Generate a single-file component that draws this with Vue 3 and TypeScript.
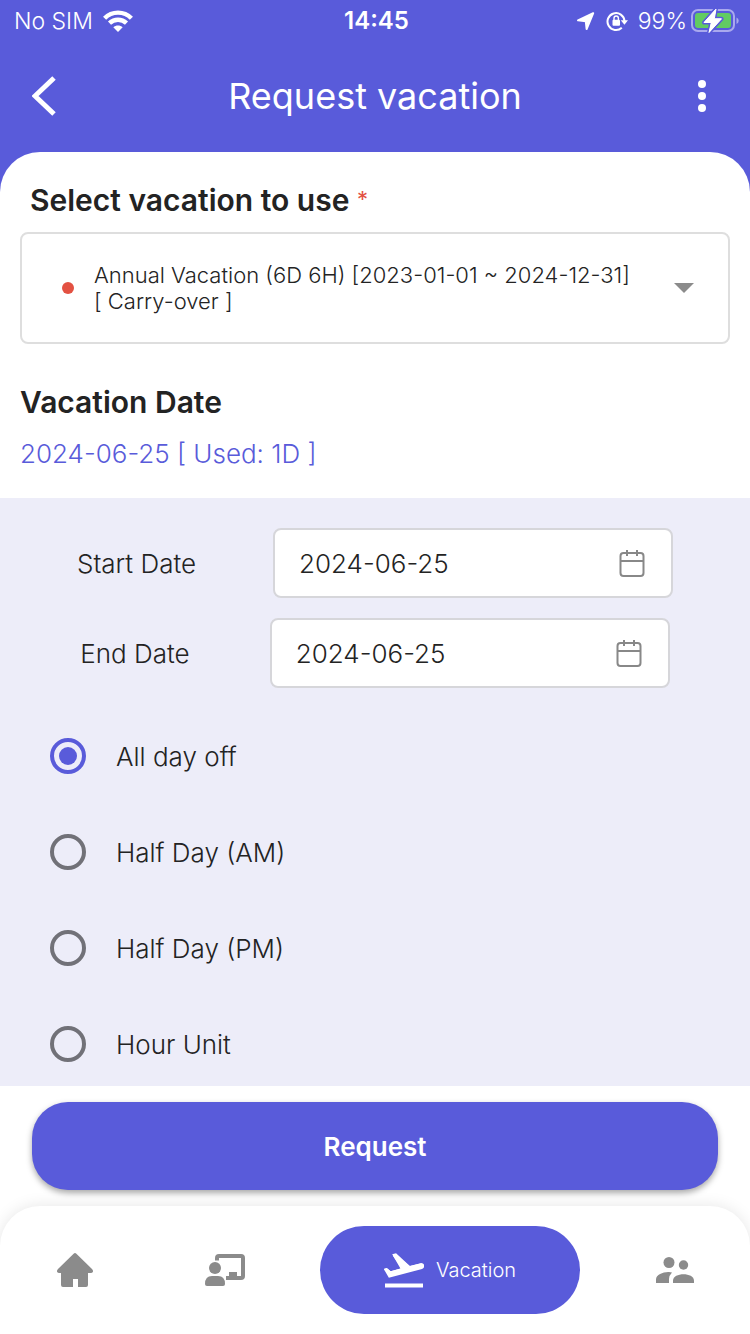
<script setup lang="ts">
import { ref } from 'vue'

interface DateField {
  id: string
  label: string
  value: string
}

interface LeaveUnit {
  value: string
  label: string
}

const vacations: string[] = [
  'Annual Vacation (6D 6H) [2023-01-01 ~ 2024-12-31] [\u00a0Carry-over\u00a0]',
]
const selectedVacation = ref<string>(vacations[0])

const dates = ref<DateField[]>([
  { id: 'start-date', label: 'Start Date', value: '2024-06-25' },
  { id: 'end-date', label: 'End Date', value: '2024-06-25' },
])

const units: LeaveUnit[] = [
  { value: 'all', label: 'All day off' },
  { value: 'am', label: 'Half Day (AM)' },
  { value: 'pm', label: 'Half Day (PM)' },
  { value: 'hour', label: 'Hour Unit' },
]
const unit = ref<string>('all')
</script>

<template>
  <div class="screen">
    <div class="status">
      <div class="status-side">
        <span>No SIM</span>
        <svg class="wifi" viewBox="0 0 30 22" width="30" height="22" aria-hidden="true">
          <g fill="none" stroke="#fff" stroke-width="4.4">
            <path d="M1.6 8.2C9 .7 21 .7 28.4 8.2" />
            <path d="M6.5 13.2c4.800-4.600 12.200-4.600 17 0" />
          </g>
          <path d="M15 22l-4.700-4.700c2.600-2.300 6.800-2.300 9.400 0z" fill="#fff" />
        </svg>
      </div>
      <span class="clock">14:45</span>
      <div class="status-side status-right">
        <svg viewBox="0 0 20 20" width="20" height="20" aria-hidden="true">
          <path d="M17.200 2.200L2 9.300l7.800 1L10.600 18z" fill="#fff" stroke="#fff" stroke-width="2" stroke-linejoin="round" />
        </svg>
        <svg class="lock" viewBox="0 0 22 22" width="22" height="22" aria-hidden="true">
          <path d="M15.800 17.800A8.500 8.500 0 1 1 18.500 11" fill="none" stroke="#fff" stroke-width="2" />
          <path d="M14.800 10.300h7.200l-3.600 4.500z" fill="#fff" />
          <rect x="6.500" y="9.800" width="7.500" height="6" rx="1" fill="#fff" />
          <path d="M8 10V8.200a2.200 2.200 0 0 1 4.400 0V10" fill="none" stroke="#fff" stroke-width="1.400" />
        </svg>
        <span>99%</span>
        <svg class="battery" viewBox="0 0 48 26" width="48" height="26" aria-hidden="true">
          <rect x="1" y="2" width="42" height="21" rx="6" fill="none" stroke="#a9a9ee" stroke-width="2" />
          <rect x="4" y="5" width="36" height="15" rx="3" fill="#62cb62" />
          <path d="M45.500 9.500v6.500q2.200-1 2.200-3.200t-2.200-3.300z" fill="#a9a9ee" />
          <path d="M25 1L13 14.500h7.300L18 24.500 30.500 10.800h-7.200z" fill="#fff" stroke="#595bda" stroke-width="4" paint-order="stroke" stroke-linejoin="round" />
          <path d="M25 1L13 14.500h7.300L18 24.500 30.500 10.800h-7.200z" fill="#fff" stroke="#fff" stroke-width="1" stroke-linejoin="round" />
        </svg>
      </div>
    </div>

    <header class="header">
      <button class="icon-button" type="button" aria-label="Back">
        <svg viewBox="0 0 24 40" width="24" height="40" aria-hidden="true">
          <path d="M22 2L3 20l19 18" fill="none" stroke="#fff" stroke-width="5" />
        </svg>
      </button>
      <h1>Request vacation</h1>
      <button class="icon-button more" type="button" aria-label="More options">
        <svg viewBox="0 0 8 32" width="8" height="32" aria-hidden="true">
          <g fill="#fff">
            <circle cx="4" cy="4" r="4" />
            <circle cx="4" cy="16" r="4" />
            <circle cx="4" cy="28" r="4" />
          </g>
        </svg>
      </button>
    </header>

    <main class="sheet">
      <section class="choose">
        <label class="heading choose-label" for="vacation">
          Select vacation to use <span class="required">*</span>
        </label>
        <div class="select-box">
          <span class="dot"></span>
          <select id="vacation" v-model="selectedVacation">
            <option v-for="v in vacations" :key="v" :value="v">{{ v }}</option>
          </select>
          <svg viewBox="0 0 20 10" width="20" height="10" aria-hidden="true">
            <path d="M0 0h20L10 10z" fill="#8b8b8b" />
          </svg>
        </div>
      </section>

      <section class="summary">
        <h2 class="heading">Vacation Date</h2>
        <p>2024-06-25 [ Used: 1D ]</p>
      </section>

      <section class="panel">
        <div v-for="d in dates" :key="d.id" class="date-row">
          <label :for="d.id">{{ d.label }}</label>
          <div class="date-box">
            <input :id="d.id" v-model="d.value" type="text" />
            <button type="button" :aria-label="'Pick ' + d.label">
              <svg viewBox="0 0 26 28" width="26" height="28" aria-hidden="true">
                <g fill="none" stroke="#888" stroke-width="2">
                  <rect x="1.500" y="4" width="23" height="23" rx="3" />
                  <path d="M1.500 12h23M8 1v6M18 1v6" />
                </g>
              </svg>
            </button>
          </div>
        </div>

        <div class="units" role="radiogroup" aria-label="Vacation unit">
          <label v-for="u in units" :key="u.value" class="unit">
            <input v-model="unit" type="radio" name="unit" :value="u.value" />
            <span>{{ u.label }}</span>
          </label>
        </div>
      </section>
    </main>

    <div class="action">
      <button class="request" type="button">Request</button>
    </div>

    <nav class="nav">
      <a href="#home" class="tab" aria-label="Home">
        <svg viewBox="0 0 36 34" width="36" height="34" aria-hidden="true">
          <path d="M18 0Q18.700 0 19.400.7L35 16q1.500 1.700.8 3-.5 1-2 1H31v12q0 2-2 2h-8v-8h-5v8H6q-2 0-2-2V20H2.200Q.7 20 .2 19q-.7-1.300.8-3L16.600.7Q17.300 0 18 0z" fill="#8b8b8b" />
        </svg>
      </a>
      <a href="#class" class="tab" aria-label="Work">
        <svg viewBox="0 0 40 32" width="40" height="32" aria-hidden="true">
          <path d="M12 6.500V4q0-2 2-2h22q2 0 2 2v18q0 2-2 2H21" fill="none" stroke="#8b8b8b" stroke-width="4" />
          <path d="M24 23v-5h8v5z" fill="#8b8b8b" />
          <circle cx="10" cy="14" r="6" fill="#8b8b8b" />
          <path d="M0 30q0-8 7-8h6q7 0 7 8 0 2-2 2H2q-2 0-2-2z" fill="#8b8b8b" />
        </svg>
      </a>
      <a href="#vacation" class="tab active" aria-current="page">
        <svg viewBox="2 3.500 20 17.500" width="40" height="35" aria-hidden="true">
          <path d="M2.500 18.800h19v2h-19zM22.070 9.640c-.21-.8-1.040-1.280-1.840-1.060L14.920 10l-6.900-6.430-1.930.51 4.140 7.170-4.970 1.330-1.970-1.540-1.450.39 2.590 4.490L21 11.490c.81-.23 1.280-1.050 1.070-1.850z" fill="#fff" />
          <path d="M21 10L5.500 14.200 3.300 11.800 5.200 13.400 12 11.500 7.200 4.700 14.700 10.800 20.500 9.400" fill="#fff" stroke="#fff" stroke-width="1.400" stroke-linejoin="round" />
        </svg>
        <span>Vacation</span>
      </a>
      <a href="#people" class="tab" aria-label="People">
        <svg viewBox="0 0 38 26" width="38" height="26" aria-hidden="true">
          <g fill="#8b8b8b">
            <circle cx="13" cy="5.500" r="5.500" />
            <circle cx="27.500" cy="8" r="4.700" />
            <path d="M16 15.500Q13 18.500 13 22v4H0v-3.500c0-5 7.500-7.800 13-7.500q1.500 0 3 .5z" />
            <path d="M17 26v-2.500c0-8.500 21-8.500 21 0V26z" />
          </g>
        </svg>
      </a>
    </nav>
  </div>
</template>

<style>
body {
  background: #fff;
}
</style>

<style scoped>
.screen {
  display: flex;
  flex-direction: column;
  min-height: 100vh;
  background: #fff;
  color: #232323;
  font-family: Inter, "Liberation Sans", sans-serif;
  font-size: 26px;
  font-weight: 350;
}

.screen *,
.screen *::before {
  box-sizing: border-box;
}

button,
input,
select {
  margin: 0;
  padding: 0;
  border: 0;
  background: none;
  color: inherit;
  font: inherit;
}

svg {
  display: block;
  flex: none;
}

.status {
  display: grid;
  grid-template-columns: 1fr auto 1fr;
  align-items: center;
  height: 40px;
  padding: 1px 11px 0 14px;
  background: #595bda;
  color: #fff;
  font-size: 23px;
}

.status-side {
  display: flex;
  align-items: center;
  gap: 10px;
}

.status-right {
  justify-content: flex-end;
}

.battery {
  margin-left: -6px;
}

.clock {
  font-size: 24px;
  font-weight: 600;
}

.header {
  display: flex;
  align-items: center;
  justify-content: space-between;
  height: 152px;
  margin-bottom: -40px;
  padding: 0 32px 40px;
  background: #595bda;
  color: #fff;
}

.header h1 {
  margin: 0;
  font-size: 36px;
  font-weight: 400;
}

.icon-button {
  display: flex;
  width: 32px;
}

.more {
  justify-content: center;
}

.sheet {
  flex: 1;
  display: flex;
  flex-direction: column;
  border-radius: 40px 40px 0 0;
  background: #fff;
}

.heading {
  margin: 0;
  font-size: 30px;
  font-weight: 600;
  line-height: 40px;
}

.choose {
  padding: 28px 20px 0;
}

.choose-label {
  display: block;
  padding: 0 10px 12px;
}

.required {
  color: #e35142;
  font-size: 22px;
  font-weight: 400;
  line-height: 20px;
  vertical-align: 4px;
}

.select-box {
  display: flex;
  align-items: center;
  min-height: 112px;
  padding: 0 34px 0 40px;
  border: 2px solid #dedede;
  border-radius: 8px;
}

.dot {
  flex: none;
  width: 12px;
  height: 12px;
  margin-right: 20px;
  border-radius: 50%;
  background: #e35142;
}

.select-box select {
  flex: 1;
  min-width: 0;
  margin-right: 16px;
  appearance: none;
  font-size: 22px;
  line-height: 26px;
  white-space: normal;
}

.summary {
  padding: 38px 20px 26px;
}

.summary p {
  margin: 14px 0 0;
  color: #595bda;
  line-height: 36px;
}

.panel {
  flex: 1;
  display: flex;
  flex-direction: column;
  gap: 20px;
  padding: 30px 0 24px;
  background: #ededf9;
}

.date-row {
  display: flex;
  align-items: center;
  justify-content: space-evenly;
}

.date-box {
  display: flex;
  align-items: center;
  width: 400px;
  max-width: 60%;
  height: 70px;
  padding: 0 26px 0 24px;
  border: 2px solid #d6d6da;
  border-radius: 8px;
  background: #fff;
}

.date-box input {
  flex: 1;
  min-width: 0;
}

.units {
  display: flex;
  flex-direction: column;
  gap: 60px;
  padding: 30px 50px 0;
}

.unit {
  display: flex;
  align-items: center;
  gap: 30px;
  height: 36px;
}

.unit input {
  flex: none;
  display: grid;
  place-items: center;
  width: 36px;
  height: 36px;
  border: 4px solid #717178;
  border-radius: 50%;
  appearance: none;
}

.unit input:checked {
  border-color: #595bda;
}

.unit input:checked::before {
  width: 18px;
  height: 18px;
  border-radius: 50%;
  background: #595bda;
  content: "";
}

.action {
  padding: 16px 32px;
}

.request {
  width: 100%;
  height: 88px;
  border-radius: 36px;
  background: #595bda;
  box-shadow: 0 3px 6px rgba(0, 0, 0, 0.35);
  color: #fff;
  font-weight: 600;
}

.nav {
  display: flex;
  align-items: center;
  height: 128px;
  border-radius: 40px 40px 0 0;
  background: #fff;
  box-shadow: 0 0 16px rgba(0, 0, 0, 0.1);
}

.tab {
  flex: 150;
  display: flex;
  align-items: center;
  justify-content: center;
  gap: 12px;
  color: #fff;
  font-size: 20px;
  text-decoration: none;
}

.active {
  flex: 260;
  height: 88px;
  margin: 0 20px;
  border-radius: 44px;
  background: #595bda;
}
</style>
